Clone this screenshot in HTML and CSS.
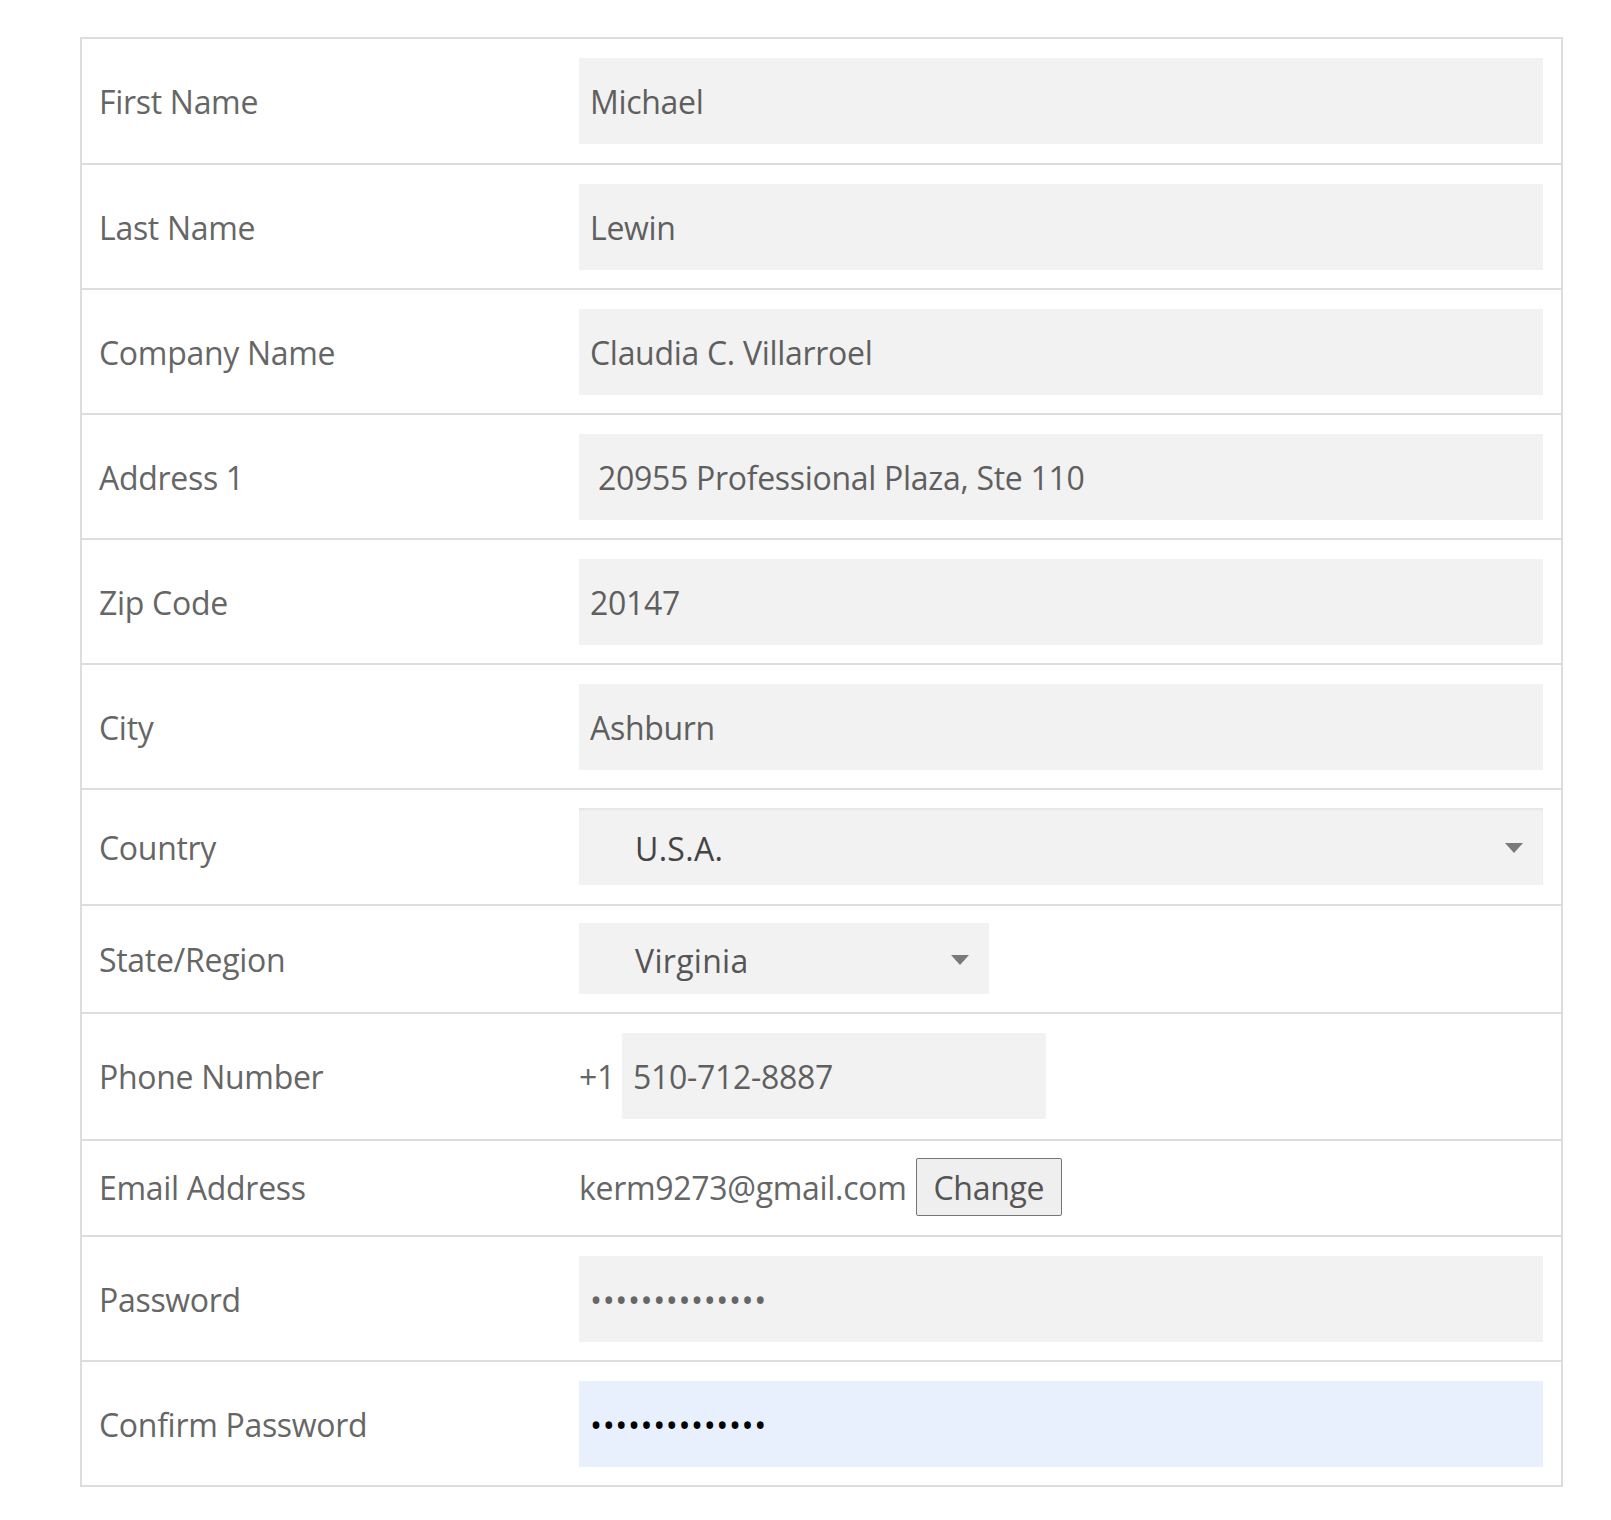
FILE: index.html
```html
<!DOCTYPE html>
<html lang="en">
<head>
<meta charset="utf-8">
<title>Account details</title>
<link rel="stylesheet" href="styles.css">
</head>
<body>
<form class="account-form">
  <div class="row row-first">
    <label class="label" for="fn">First Name</label>
    <div class="field"><input id="fn" class="input" type="text" value="Michael"></div>
  </div>
  <div class="row">
    <label class="label" for="ln">Last Name</label>
    <div class="field"><input id="ln" class="input" type="text" value="Lewin"></div>
  </div>
  <div class="row">
    <label class="label" for="cn">Company Name</label>
    <div class="field"><input id="cn" class="input" type="text" value="Claudia C. Villarroel"></div>
  </div>
  <div class="row">
    <label class="label" for="a1">Address 1</label>
    <div class="field"><input id="a1" class="input" type="text" value=" 20955 Professional Plaza, Ste 110"></div>
  </div>
  <div class="row">
    <label class="label" for="zip">Zip Code</label>
    <div class="field"><input id="zip" class="input" type="text" value="20147"></div>
  </div>
  <div class="row">
    <label class="label" for="city">City</label>
    <div class="field"><input id="city" class="input" type="text" value="Ashburn"></div>
  </div>
  <div class="row row-country">
    <span class="label">Country</span>
    <div class="field">
      <div class="select select-wide">
        <span class="select-value dark">U.S.A.</span>
        <svg class="caret" width="18" height="10" viewBox="0 0 18 10"><path d="M0 0 H18 L9 10 Z" fill="#7a7a7a"/></svg>
      </div>
    </div>
  </div>
  <div class="row row-state">
    <span class="label">State/Region</span>
    <div class="field">
      <div class="select select-narrow">
        <span class="select-value">Virginia</span>
        <svg class="caret" width="18" height="10" viewBox="0 0 18 10"><path d="M0 0 H18 L9 10 Z" fill="#7a7a7a"/></svg>
      </div>
    </div>
  </div>
  <div class="row row-phone">
    <label class="label" for="ph">Phone Number</label>
    <div class="field phone">
      <span class="prefix">+1</span>
      <input id="ph" class="input input-phone" type="text" value="510-712-8887">
    </div>
  </div>
  <div class="row row-email">
    <span class="label">Email Address</span>
    <div class="field email">
      <span class="email-text">kerm9273@gmail.com</span>
      <button type="button" class="btn">Change</button>
    </div>
  </div>
  <div class="row">
    <label class="label" for="pw">Password</label>
    <div class="field"><input id="pw" class="input input-pass" type="password" value="abcdefghijklmn"></div>
  </div>
  <div class="row row-last">
    <label class="label" for="pw2">Confirm Password</label>
    <div class="field"><input id="pw2" class="input input-pass autofill" type="password" value="abcdefghijklmn"></div>
  </div>
</form>
</body>
</html>
```

FILE: styles.css
```css
html, body {
  margin: 0;
  padding: 0;
  background: #ffffff;
}

body {
  font-family: "Open Sans", "Noto Sans", sans-serif;
  color: #666666;
  padding: 37px 0 0 80px;
  letter-spacing: -0.3px;
}

.account-form {
  width: 1483px;
  border: 2px solid #dddddd;
  box-sizing: border-box;
  margin: 0;
}

.row {
  display: grid;
  grid-template-columns: 497px 1fr;
  align-items: center;
  padding: 19px 18px 18px 0;
  border-bottom: 2px solid #dddddd;
}

.row-first {
  padding-bottom: 19px;
}

.row-last {
  border-bottom: none;
  padding-bottom: 18px;
}

.label {
  padding-left: 17px;
  padding-top: 2px;
  font-size: 32px;
  line-height: 44px;
  color: #666666;
}

.field {
  display: flex;
  align-items: center;
  min-width: 0;
}

.input {
  display: block;
  width: 100%;
  height: 86px;
  box-sizing: border-box;
  border: none;
  outline: none;
  background: #f2f2f2;
  padding: 0 11px;
  margin: 0;
  font-family: "Open Sans", "Noto Sans", sans-serif;
  font-size: 32px;
  letter-spacing: -0.3px;
  color: #5f5f5f;
}

.input-pass {
  letter-spacing: 0.6px;
  color: #666666;
}

.autofill {
  background: #e8f0fe;
  color: #000000;
}

.row-country {
  padding: 18px 18px 19px 0;
}

.row-state {
  padding: 17px 18px 18px 0;
}

.select {
  display: flex;
  align-items: center;
  justify-content: space-between;
  box-sizing: border-box;
  background: #f2f2f2;
  padding: 3px 20px 0 56px;
  font-size: 32px;
  letter-spacing: 0.3px;
}

.select-wide {
  width: 100%;
  height: 77px;
  box-shadow: inset 0 2px 2px rgba(0, 0, 0, 0.05);
}

.select-narrow {
  width: 410px;
  height: 71px;
}

.select-value {
  color: #555555;
}

.select-value.dark {
  color: #444444;
}

.caret {
  display: block;
  flex: none;
}

.row-phone {
  padding: 19px 18px 20px 0;
}

.phone {
  gap: 7px;
}

.prefix {
  font-size: 32px;
  color: #666666;
  flex: none;
}

.input-phone {
  width: 424px;
  flex: none;
}

.row-email {
  padding: 17px 18px 19px 0;
}

.email {
  gap: 9px;
}

.email-text {
  font-size: 32px;
  color: #666666;
}

.btn {
  height: 58px;
  box-sizing: border-box;
  padding: 0 17px;
  border: 1px solid #767676;
  border-radius: 2px;
  background: #efefef;
  font-family: "Open Sans", "Noto Sans", sans-serif;
  font-size: 32px;
  letter-spacing: -0.3px;
  color: #555555;
  cursor: pointer;
}
```
